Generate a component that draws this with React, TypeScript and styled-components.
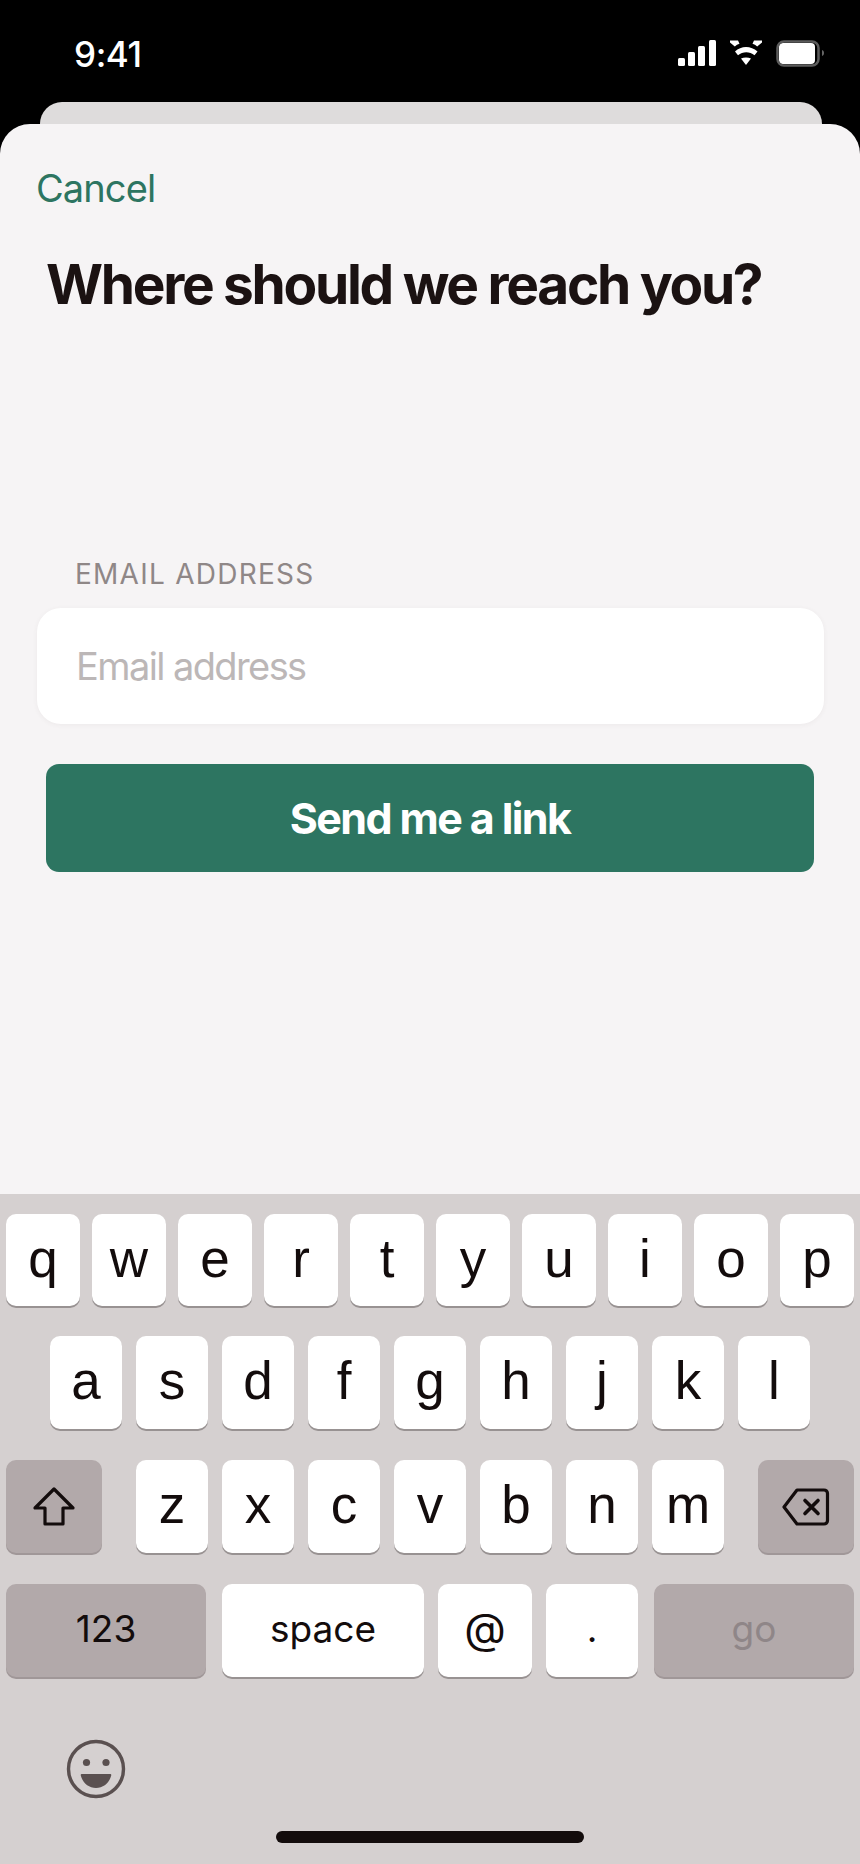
import React from "react";
import styled, { createGlobalStyle } from "styled-components";

const Global = createGlobalStyle`
  html, body { margin: 0; padding: 0; background: #000; }
  * { box-sizing: border-box; }
`;

const Screen = styled.div`
  width: 860px;
  height: 1864px;
  background: #000;
  display: flex;
  flex-direction: column;
  overflow: hidden;
  font-family: Inter, "Liberation Sans", sans-serif;
  color: #130c0c;
`;

const StatusBar = styled.div`
  height: 102px;
  padding: 40px 34px 0 74px;
  display: flex;
  justify-content: space-between;
  align-items: flex-start;
  flex: none;
`;

const Clock = styled.div`
  color: #fff;
  font-size: 35px;
  font-weight: 500;
  line-height: 28px;
  letter-spacing: -0.4px;
`;

const StatusIcons = styled.svg`
  display: block;
  width: 148px;
  height: 28px;
`;

const BackCard = styled.div`
  height: 22px;
  flex: none;
  margin: 0 38px 0 40px;
  background: #dedcdc;
  border-radius: 28px 28px 0 0;
`;

const Sheet = styled.main`
  flex: 1;
  background: #f6f4f5;
  border-radius: 30px 30px 0 0;
  padding: 42px 36px 0 37px;
  display: flex;
  flex-direction: column;
`;

const Cancel = styled.button`
  align-self: flex-start;
  border: 0;
  padding: 0;
  margin-left: -1px;
  background: none;
  font-family: inherit;
  font-size: 38px;
  line-height: 44px;
  letter-spacing: -0.9px;
  color: #2d7561;
`;

const Title = styled.h1`
  margin: 42px 0 0 9px;
  font-size: 55px;
  line-height: 64px;
  font-weight: 700;
  letter-spacing: -2.3px;
  color: #1b1212;
  white-space: nowrap;
`;

const FieldLabel = styled.label`
  display: block;
  margin: 242px 0 0 38px;
  font-size: 28px;
  line-height: 32px;
  letter-spacing: 1.25px;
  color: #8f8787;
  text-transform: uppercase;
`;

const EmailInput = styled.input`
  display: block;
  width: 787px;
  height: 116px;
  margin-top: 18px;
  padding: 0 39px;
  border: 0;
  outline: 0;
  border-radius: 24px;
  background: #fff;
  box-shadow: 0 1px 5px rgba(80, 60, 60, 0.06);
  font-family: inherit;
  font-size: 38px;
  letter-spacing: -1.6px;
  color: #130c0c;
  &::placeholder {
    color: #bcb7b7;
    opacity: 1;
  }
`;

const SendButton = styled.button`
  display: block;
  width: 768px;
  height: 108px;
  margin: 40px 0 0 9px;
  border: 0;
  border-radius: 13px;
  background: #2d7561;
  color: #fff;
  font-family: inherit;
  font-size: 43px;
  font-weight: 700;
  letter-spacing: -1.6px;
`;

const Keyboard = styled.section`
  height: 670px;
  flex: none;
  background: #d5d0d0;
  padding-top: 20px;
  display: flex;
  flex-direction: column;
`;

const KeyRow = styled.div<{ $h: number; $gap: number; $center?: boolean; $after: number }>`
  height: ${(p) => p.$h}px;
  margin-bottom: ${(p) => p.$after}px;
  padding: 0 6px;
  display: flex;
  gap: ${(p) => p.$gap}px;
  justify-content: ${(p) => (p.$center ? "center" : "flex-start")};
  flex: none;
`;

const Key = styled.div<{ $w: number; $dark?: boolean; $ml?: number; $muted?: boolean; $size?: number; $letter?: boolean }>`
  width: ${(p) => p.$w}px;
  margin-left: ${(p) => p.$ml ?? 0}px;
  flex: none;
  display: flex;
  align-items: center;
  justify-content: center;
  border-radius: 10px;
  background: ${(p) => (p.$dark ? "#b2a9aa" : "#fff")};
  box-shadow: 0 2px 0 ${(p) => (p.$dark ? "#a09798" : "#989292")};
  font-family: ${(p) => (p.$letter ? '"Liberation Sans", Inter, sans-serif' : "inherit")};
  font-size: ${(p) => p.$size ?? 53}px;
  color: ${(p) => (p.$muted ? "#8f8688" : "#130c0c")};
  line-height: 1;
  padding-bottom: ${(p) => (p.$letter ? 4 : 5)}px;
`;

const KeyLabel = styled.span`
  display: block;
`;

const KeySvg = styled.svg`
  display: block;
  margin-top: 5px;
`;

const KeyboardFoot = styled.div`
  margin-top: 62px;
  padding-left: 66px;
  flex: none;
`;

const Emoji = styled.svg`
  display: block;
  width: 60px;
  height: 60px;
`;

const HomeBar = styled.div`
  width: 308px;
  height: 12px;
  margin: 32px 0 0 276px;
  border-radius: 6px;
  background: #130c0c;
  flex: none;
`;

const row1 = "qwertyuiop".split("");
const row2 = "asdfghjkl".split("");
const row3 = "zxcvbnm".split("");

export default function App() {
  return (
    <Screen>
      <Global />
      <StatusBar>
        <Clock>9:41</Clock>
        <StatusIcons viewBox="0 0 148 28">
          <g fill="#fff">
            <rect x="0" y="18" width="7" height="8" rx="1.5" />
            <rect x="10" y="12" width="7" height="14" rx="1.5" />
            <rect x="20" y="6" width="7" height="20" rx="1.5" />
            <rect x="31" y="0" width="7" height="26" rx="1.5" />
            <path d="M52 0.500h8l1.500 3.300c-1.800.5-3.300 1.400-4.700 2.700L52 2.500z" />
            <path d="M84 0.500h-8l-1.500 3.300c1.800.5 3.300 1.400 4.700 2.700L84 2.500z" />
            <path d="M57 11.500c6-6 16-6 22.500 0l-3 3.700c-4.800-4-11.700-4-16.500 0z" />
            <path d="M63 18.500c3-1.300 7-1.300 10 0L68 25z" />
            <rect x="101" y="3" width="36" height="21" rx="4" />
            <path d="M144 10c1.300.3 2 1.600 2 3s-.7 2.700-2 3z" fill="#666" />
          </g>
          <rect x="99.500" y="1.500" width="41" height="24" rx="6.500" fill="none" stroke="#5c5c5c" strokeWidth="2.500" />
        </StatusIcons>
      </StatusBar>
      <BackCard />
      <Sheet>
        <Cancel>Cancel</Cancel>
        <Title>Where should we reach you?</Title>
        <FieldLabel htmlFor="email">Email address</FieldLabel>
        <EmailInput id="email" type="email" placeholder="Email address" readOnly />
        <SendButton>Send me a link</SendButton>
      </Sheet>
      <Keyboard>
        <KeyRow $h={92} $gap={12} $after={30}>
          {row1.map((k) => (
            <Key key={k} $w={74} $letter><KeyLabel>{k}</KeyLabel></Key>
          ))}
        </KeyRow>
        <KeyRow $h={93} $gap={14} $center $after={31}>
          {row2.map((k) => (
            <Key key={k} $w={72} $letter><KeyLabel>{k}</KeyLabel></Key>
          ))}
        </KeyRow>
        <KeyRow $h={93} $gap={14} $after={31}>
          <Key $w={96} $dark>
            <KeySvg width="44" height="42" viewBox="0 0 44 42">
              <path d="M22 3 3 22h10v16h18V22h10z" fill="none" stroke="#130c0c" strokeWidth="3.200" strokeLinejoin="round" />
            </KeySvg>
          </Key>
          <Key $w={72} $ml={20} $letter><KeyLabel>z</KeyLabel></Key>
          {row3.slice(1).map((k) => (
            <Key key={k} $w={72} $letter><KeyLabel>{k}</KeyLabel></Key>
          ))}
          <Key $w={96} $dark $ml={20}>
            <KeySvg width="48" height="38" viewBox="0 0 48 38">
              <path d="M15 2h27c2 0 3.500 1.500 3.500 3.500v27c0 2-1.500 3.500-3.500 3.500H15L2 19z" fill="none" stroke="#130c0c" strokeWidth="3.200" strokeLinejoin="round" />
              <path d="m23 12.500 13 13m0-13-13 13" stroke="#130c0c" strokeWidth="3.600" strokeLinecap="round" />
            </KeySvg>
          </Key>
        </KeyRow>
        <KeyRow $h={93} $gap={14} $after={0}>
          <Key $w={200} $dark $size={37}><KeyLabel>123</KeyLabel></Key>
          <Key $w={202} $ml={2} $size={37}><KeyLabel>space</KeyLabel></Key>
          <Key $w={94} $size={43}><KeyLabel>@</KeyLabel></Key>
          <Key $w={92} $size={37}><KeyLabel>.</KeyLabel></Key>
          <Key $w={200} $dark $ml={2} $muted $size={37}><KeyLabel>go</KeyLabel></Key>
        </KeyRow>
        <KeyboardFoot>
          <Emoji viewBox="0 0 60 60">
            <circle cx="30" cy="30" r="27.500" fill="none" stroke="#5a5050" strokeWidth="3.400" />
            <circle cx="20.500" cy="23.500" r="3.600" fill="#5a5050" />
            <circle cx="40" cy="23.500" r="3.600" fill="#5a5050" />
            <path d="M16 35h28c1 0 1.500.6 1.200 1.600C43.500 43.500 37.500 49 30 49s-13.500-5.500-15.200-12.400C14.500 35.600 15 35 16 35z" fill="#5a5050" />
          </Emoji>
        </KeyboardFoot>
        <HomeBar />
      </Keyboard>
    </Screen>
  );
}
